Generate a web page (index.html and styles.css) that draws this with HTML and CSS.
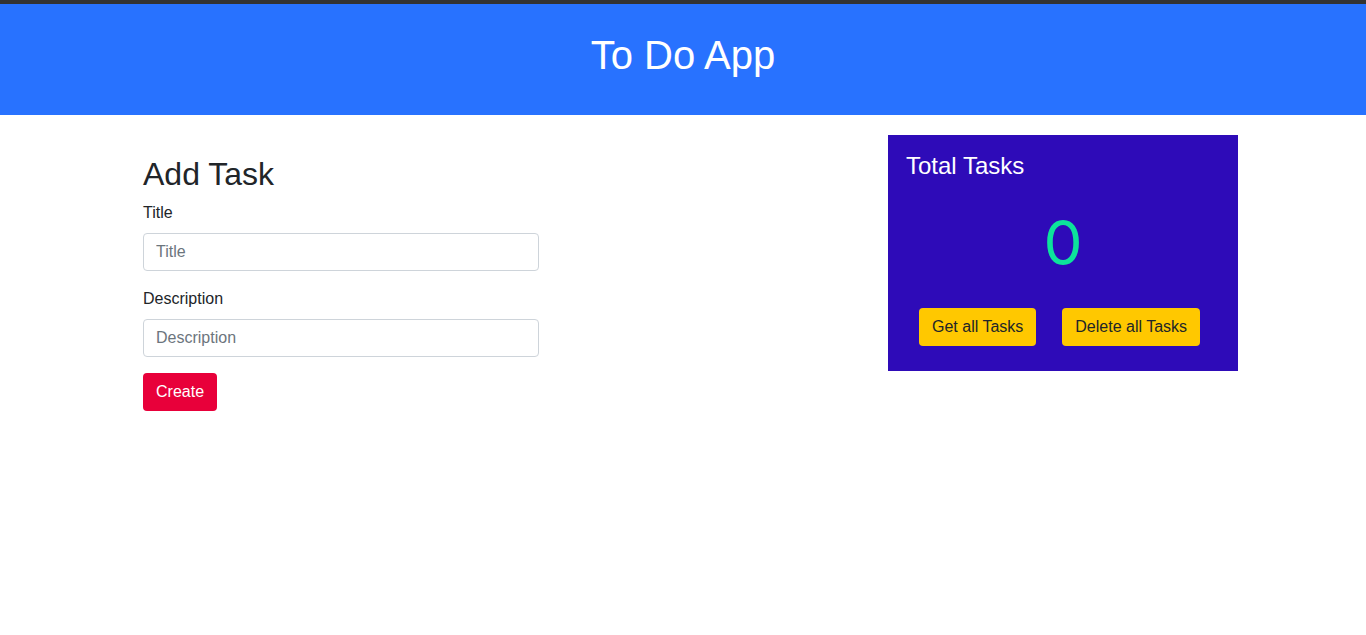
FILE: index.html
```html
<!DOCTYPE html>
<html lang="en">
<head>
<meta charset="utf-8">
<title>To Do App</title>
<link rel="stylesheet" href="styles.css">
</head>
<body>
<header class="app-header">
  <h1 class="app-title">To Do App</h1>
</header>
<main class="container">
  <section class="add-task">
    <h2 class="section-title">Add Task</h2>
    <div class="form-group">
      <label class="form-label" for="title">Title</label>
      <input class="form-control" id="title" type="text" placeholder="Title">
    </div>
    <div class="form-group">
      <label class="form-label" for="description">Description</label>
      <input class="form-control" id="description" type="text" placeholder="Description">
    </div>
    <button class="btn btn-create" type="button">Create</button>
  </section>
  <aside class="total-card">
    <h4 class="total-title">Total Tasks</h4>
    <div class="total-count">0</div>
    <div class="total-actions">
      <button class="btn btn-warning" type="button">Get all Tasks</button>
      <button class="btn btn-warning" type="button">Delete all Tasks</button>
    </div>
  </aside>
</main>
</body>
</html>
```

FILE: styles.css
```css
* {
  box-sizing: border-box;
}

html, body {
  margin: 0;
  padding: 0;
  background: #ffffff;
}

body {
  font-family: "Liberation Sans", Arial, sans-serif;
  font-size: 16px;
  line-height: 1.5;
  color: #212529;
}

.app-header {
  background: #2872ff;
  border-top: 4px solid #333333;
  padding: 27px 0 36px;
  text-align: center;
}

.app-title {
  margin: 0;
  font-size: 40px;
  font-weight: 400;
  line-height: 1.2;
  color: #ffffff;
}

.container {
  width: 1110px;
  margin: 0 auto;
  display: flex;
  justify-content: space-between;
  align-items: flex-start;
}

.add-task {
  width: 411px;
  padding: 40px 0 0 15px;
}

.section-title {
  margin: 0 0 8px;
  font-size: 32px;
  font-weight: 400;
  line-height: 1.2;
}

.form-group {
  margin-bottom: 16px;
}

.form-label {
  display: block;
  margin-bottom: 8px;
  line-height: 24px;
}

.form-control {
  display: block;
  width: 100%;
  height: 38px;
  padding: 6px 12px;
  font-family: inherit;
  font-size: 16px;
  line-height: 1.5;
  color: #212529;
  background: #ffffff;
  border: 1px solid #ced4da;
  border-radius: 4px;
  outline: none;
}

.form-control::placeholder {
  color: #6c757d;
  opacity: 1;
}

.btn {
  display: inline-block;
  height: 38px;
  padding: 6px 12px;
  font-family: inherit;
  font-size: 16px;
  line-height: 1.5;
  border: 1px solid transparent;
  border-radius: 4px;
  cursor: pointer;
}

.btn-create {
  background: #e8003a;
  color: #ffffff;
}

.total-card {
  width: 350px;
  margin-top: 20px;
  padding: 17px 18px 25px;
  background: #2e0bb8;
  color: #ffffff;
}

.total-title {
  margin: 0;
  font-size: 24px;
  font-weight: 400;
  line-height: 1.2;
}

.total-count {
  margin-top: 25px;
  font-family: Inter, "Liberation Sans", sans-serif;
  font-size: 62px;
  font-weight: 400;
  line-height: 1.2;
  text-align: center;
  color: #0de39b;
}

.total-actions {
  display: flex;
  gap: 26px;
  margin-top: 28px;
  padding-left: 13px;
}

.btn-warning {
  background: #ffc800;
  color: #212529;
}
```
